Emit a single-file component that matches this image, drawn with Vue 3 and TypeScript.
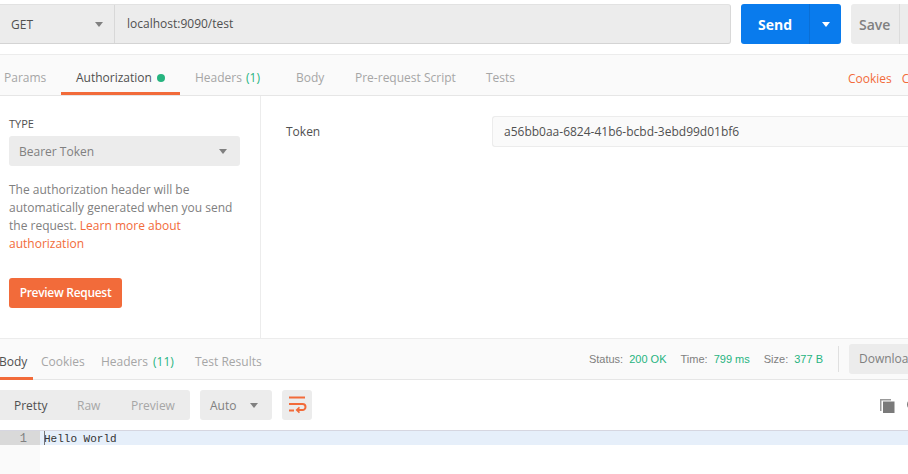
<script setup lang="ts">
const reqTabs = [
  { label: 'Params', x: 'p' },
  { label: 'Authorization', x: 'a' },
  { label: 'Headers', x: 'h' },
  { label: 'Body', x: 'b' },
  { label: 'Pre-request Script', x: 'r' },
  { label: 'Tests', x: 't' },
]
</script>

<template>
  <div class="app">
    <div class="top">
      <div class="url-group">
        <div class="method"><span>GET</span><i class="caret"></i></div>
        <div class="url">localhost:9090/test</div>
      </div>
      <div class="send">
        <span class="send-label">Send</span>
        <span class="send-drop"><i class="caret white"></i></span>
      </div>
      <div class="save"><span class="save-label">Save</span></div>
    </div>

    <div class="req-tabs">
      <div v-for="t in reqTabs" :key="t.x" class="tab" :class="'t-' + t.x">
        {{ t.label }}
        <i v-if="t.x === 'a'" class="dot"></i>
        <span v-if="t.x === 'h'" class="count">(1)</span>
      </div>
      <div class="links"><span>Cookies</span><span>Code</span></div>
    </div>

    <div class="auth">
      <aside class="side">
        <div class="type-label">TYPE</div>
        <div class="select"><span>Bearer Token</span><i class="caret"></i></div>
        <p class="help">
          The authorization header will be automatically generated when you send the request.
          <a>Learn more about authorization</a>
        </p>
        <div class="preview">Preview Request</div>
      </aside>
      <div class="fields">
        <span class="field-label">Token</span>
        <div class="field-input">a56bb0aa-6824-41b6-bcbd-3ebd99d01bf6</div>
      </div>
    </div>

    <div class="res-bar">
      <div class="res-tab active">Body</div>
      <div class="res-tab r-cookies">Cookies</div>
      <div class="res-tab r-headers">Headers <span class="count wide">(11)</span></div>
      <div class="res-tab r-tests">Test Results</div>
      <div class="stats">
        <span>Status: <b>200 OK</b></span>
        <span>Time: <b>799 ms</b></span>
        <span>Size: <b>377 B</b></span>
      </div>
      <div class="sep"></div>
      <div class="download">Download</div>
    </div>

    <div class="tools">
      <div class="modes">
        <span class="on">Pretty</span><span>Raw</span><span>Preview</span>
      </div>
      <div class="auto"><span>Auto</span><i class="caret"></i></div>
      <div class="wrap">
        <svg width="20" height="18" viewBox="0 0 20 18" fill="none" stroke="#f26b3a" stroke-width="2">
          <path d="M2 1.5h16M2 8h13.5a3 3 0 0 1 0 6H10M2 14.5h5" />
          <path d="M12.5 11.4l-2.8 2.6 2.8 2.6" stroke-width="1.6" />
        </svg>
      </div>
      <div class="tool-icons">
        <svg width="15" height="15" viewBox="0 0 15 15">
          <path d="M0 1h11v1.5H1.5V13H0z" fill="#999" />
          <rect x="3" y="3.5" width="11.5" height="11.5" fill="#7a7a7a" />
        </svg>
        <svg width="15" height="15" viewBox="0 0 15 15" fill="none" stroke="#7a7a7a" stroke-width="2">
          <circle cx="6.5" cy="6.5" r="4.5" />
        </svg>
      </div>
    </div>

    <div class="editor">
      <div class="gutter"><div class="num">1</div></div>
      <div class="lines"><div class="line">Hello World</div></div>
    </div>
  </div>
</template>

<style>
html, body { margin: 0; background: #fff; overflow: hidden; }
</style>

<style scoped>
.app {
  width: 908px;
  height: 474px;
  overflow: hidden;
  background: #fff;
  font-family: "Open Sans", sans-serif;
  font-size: 12px;
  color: #808080;
  display: flex;
  flex-direction: column;
}
.caret {
  display: inline-block;
  width: 0;
  height: 0;
  border-left: 4.5px solid transparent;
  border-right: 4.5px solid transparent;
  border-top: 5px solid #808080;
}
.caret.white { border-top-color: #fff; }

.top {
  display: flex;
  height: 40px;
  margin-top: 4px;
  flex: none;
  width: 940px;
}
.url-group {
  width: 731px;
  display: flex;
  background: #ececec;
  border-top: 1px solid #e2e2e2;
  border-bottom: 1px solid #d4d4d4;
  border-right: 1px solid #d8d8d8;
  box-sizing: border-box;
  border-radius: 0 3px 3px 0;
}
.method {
  width: 115px;
  box-sizing: border-box;
  padding: 1px 11px 0;
  display: flex;
  align-items: center;
  justify-content: space-between;
  border-right: 1px solid #d8d8d8;
  color: #505050;
  font-size: 12px;
  font-weight: 500;
}
.url {
  padding-left: 12px;
  line-height: 37px;
  color: #505050;
  font-size: 12px;
}
.send {
  margin-left: 10px;
  width: 100px;
  background: #097bed;
  border-radius: 3px;
  display: flex;
  color: #fff;
  font-size: 14px;
  font-weight: 700;
}
.send-label {
  width: 68px;
  text-align: center;
  line-height: 42px;
  border-right: 1px solid #0a6fd6;
}
.send-drop {
  flex: 1;
  display: flex;
  align-items: center;
  justify-content: center;
}
.save {
  margin-left: 10px;
  width: 70px;
  background: #ececec;
  border-radius: 3px;
  color: #808080;
  font-size: 14px;
  font-weight: 600;
  line-height: 42px;
  height: 40px;
}
.save-label {
  display: block;
  width: 49px;
  height: 40px;
  box-sizing: border-box;
  padding-left: 8px;
  border-right: 1px solid #dcdcdc;
}

.req-tabs {
  margin-top: 10px;
  height: 42px;
  box-sizing: border-box;
  flex: none;
  display: flex;
  background: #fafafa;
  border-top: 1px solid #ececec;
  border-bottom: 1px solid #e6e6e6;
  position: relative;
}
.tab {
  line-height: 45px;
  height: 40px;
  box-sizing: border-box;
  color: #a6a6a6;
  white-space: nowrap;
}
.t-p { margin-left: 4px; width: 57px; }
.t-a {
  width: 119px;
  padding-left: 15px;
  color: #505050;
  border-bottom: 3px solid #f26b3a;
}
.dot {
  display: inline-block;
  width: 8px;
  height: 8px;
  margin-left: 2px;
  border-radius: 50%;
  background: #26b47f;
}
.t-h { margin-left: 15px; width: 101px; }
.t-b { width: 59px; }
.t-r { width: 131px; }
.count { color: #26b47f; margin-left: 1px; }
.count.wide { margin-left: 2px; }
.links {
  position: absolute;
  left: 848px;
  top: 0;
  display: flex;
  gap: 10px;
  line-height: 47px;
  color: #f26b3a;
  white-space: nowrap;
}

.auth {
  height: 242px;
  flex: none;
  display: flex;
}
.side {
  width: 261px;
  box-sizing: border-box;
  border-right: 1px solid #ececec;
  padding: 20px 20px 0 9px;
}
.type-label {
  font-size: 11px;
  line-height: 15px;
  color: #505050;
}
.select {
  margin-top: 5px;
  height: 30px;
  background: #ececec;
  border-radius: 3px;
  display: flex;
  align-items: center;
  justify-content: space-between;
  padding: 1px 13px 0 10px;
  color: #808080;
  box-sizing: border-box;
}
.help {
  margin: 15px 0 0;
  line-height: 18px;
  font-size: 12px;
  color: #808080;
}
.help a { color: #f26b3a; }
.preview {
  margin-top: 25px;
  width: 113px;
  height: 30px;
  line-height: 30px;
  background: #f26b3a;
  border-radius: 3px;
  color: #fff;
  font-weight: 600;
  font-size: 12px;
  letter-spacing: -0.3px;
  text-align: center;
}
.fields {
  flex: 1;
  display: flex;
  align-items: flex-start;
  padding-top: 20px;
  min-width: 0;
}
.field-label {
  margin-left: 25px;
  width: 206px;
  line-height: 31px;
  color: #505050;
}
.field-input {
  flex: 1;
  height: 31px;
  line-height: 30px;
  box-sizing: border-box;
  padding-left: 11px;
  background: #fafafa;
  border: 1px solid #ececec;
  border-right: 0;
  border-radius: 3px 0 0 3px;
  color: #505050;
}

.res-bar {
  height: 42px;
  flex: none;
  box-sizing: border-box;
  display: flex;
  align-items: flex-start;
  background: #fafafa;
  border-top: 1px solid #ececec;
  border-bottom: 1px solid #e6e6e6;
  white-space: nowrap;
}
.res-tab {
  color: #a6a6a6;
  line-height: 45px;
  height: 41px;
  box-sizing: border-box;
}
.res-tab.active {
  color: #505050;
  width: 33px;
  border-bottom: 3px solid #f26b3a;
  text-indent: -1px;
}
.r-cookies { margin-left: 8px; width: 60px; }
.r-headers { width: 94px; }
.stats {
  margin-left: auto;
  display: flex;
  gap: 14px;
  font-family: "Liberation Sans", sans-serif;
  font-size: 11px;
  line-height: 41px;
  color: #808080;
}
.stats b { font-weight: 400; color: #26b47f; margin-left: 3px; }
.sep {
  width: 1px;
  height: 26px;
  margin: 7px 10px 0 15px;
  background: #e0e0e0;
}
.download {
  margin-top: 5px;
  flex: none;
  width: 59px;
  height: 30px;
  line-height: 30px;
  box-sizing: border-box;
  padding-left: 10px;
  overflow: hidden;
  background: #ececec;
  border-radius: 3px 0 0 3px;
  color: #808080;
}

.tools {
  height: 51px;
  flex: none;
  box-sizing: border-box;
  border-bottom: 1px solid #d6d6e0;
  display: flex;
  align-items: flex-start;
  padding-top: 10px;
}
.modes {
  width: 190px;
  height: 30px;
  background: #ececec;
  border-radius: 0 3px 3px 0;
  display: flex;
  line-height: 32px;
  color: #a6a6a6;
}
.modes span { white-space: nowrap; }
.modes .on { margin-left: 14px; width: 63px; color: #505050; }
.modes span:nth-child(2) { width: 54px; }
.auto {
  margin-left: 10px;
  width: 72px;
  height: 30px;
  box-sizing: border-box;
  padding: 0 14px 0 10px;
  background: #ececec;
  border-radius: 3px;
  display: flex;
  align-items: center;
  justify-content: space-between;
  color: #808080;
}
.wrap {
  margin-left: 10px;
  width: 30px;
  height: 30px;
  background: #ececec;
  border-radius: 3px;
  display: flex;
  align-items: center;
  justify-content: center;
}
.tool-icons {
  margin-left: auto;
  display: flex;
  gap: 11px;
  padding-top: 8px;
  margin-right: -13px;
}
.editor {
  flex: 1;
  display: flex;
  min-height: 0;
}
.gutter {
  width: 40px;
  flex: none;
  background: #fafafa;
}
.num {
  height: 14px;
  background: #d9d9d9;
  color: #808080;
  font-family: "Liberation Mono", monospace;
  font-size: 12px;
  line-height: 17px;
  text-align: right;
  padding-right: 13px;
}
.lines { flex: 1; }
.line {
  height: 14px;
  background: #e6effa;
  font-family: "Liberation Mono", monospace;
  font-size: 11px;
  line-height: 17px;
  color: #333;
  padding-left: 4px;
  box-sizing: border-box;
  position: relative;
}
.line::before {
  content: "";
  position: absolute;
  left: 4px;
  top: 0;
  width: 1px;
  height: 14px;
  background: #777;
}
</style>
